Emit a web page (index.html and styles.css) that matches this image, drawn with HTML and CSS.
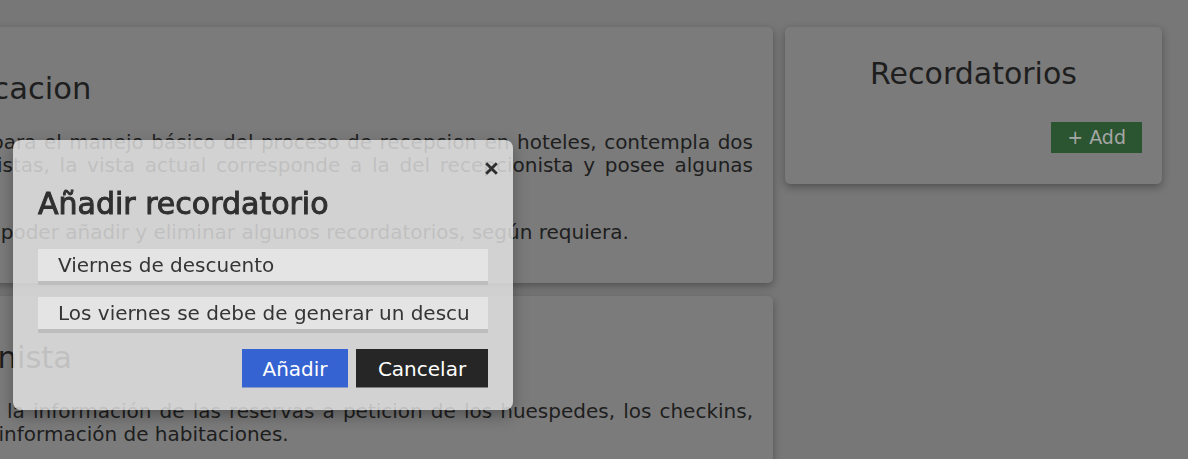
FILE: index.html
```html
<!DOCTYPE html>
<html lang="es">
<head>
<meta charset="utf-8">
<title>Recepción</title>
<link rel="stylesheet" href="styles.css">
</head>
<body>
<div class="layout">
  <main class="col-main">
    <section class="card">
      <h2 class="card-title">Información general acerca de la aplicacion</h2>
      <p class="para">
        <span class="ln jf">Esta aplicación fue desarrollada como una herramienta para el manejo básico del proceso de recepcion en hoteles, contempla dos</span>
        <span class="ln jf">vistas: una para administradores y otra para recepcionistas, la vista actual corresponde a la del recepcionista y posee algunas</span>
        <span class="ln">funcionalidades adicionales.</span>
      </p>
      <p class="para">
        <span class="ln">Adicional a esto, el recepcionista tendrá la posibilidad de poder añadir y eliminar algunos recordatorios, según requiera.</span>
      </p>
    </section>
    <section class="card">
      <h2 class="card-title">Funcionalidades de la vista - recepcionista</h2>
      <p class="para">
        <span class="ln jf">Desde aquí el recepcionista puede gestionar y consultar la información de las reservas a peticion de los huespedes, los checkins,</span>
        <span class="ln">los checkouts, los pagos de cada huesped, y consultar la información de habitaciones.</span>
      </p>
    </section>
  </main>
  <aside class="col-side">
    <section class="card card-side">
      <h2 class="side-title">Recordatorios</h2>
      <div class="side-actions"><button class="btn-add" type="button">+ Add</button></div>
    </section>
  </aside>
</div>

<div class="modal" role="dialog" aria-label="Añadir recordatorio">
  <button class="modal-close" type="button" aria-label="Cerrar">
    <svg width="13" height="13" viewBox="0 0 13 13"><path d="M1.2 1.2L11.8 11.8M11.8 1.2L1.2 11.8" stroke="#2e2e2e" stroke-width="2.8" fill="none"/></svg>
  </button>
  <h3 class="modal-title">Añadir recordatorio</h3>
  <div class="modal-fields">
    <input class="field" type="text" value="Viernes de descuento">
    <input class="field" type="text" value="Los viernes se debe de generar un descuento del 10% en todas las reservas">
  </div>
  <div class="modal-actions">
    <button class="btn btn-primary" type="button">Añadir</button>
    <button class="btn btn-dark" type="button">Cancelar</button>
  </div>
</div>
</body>
</html>
```
FILE: styles.css
```css
html, body {
  margin: 0;
  padding: 0;
  overflow: hidden;
  background: #777777;
  font-family: "DejaVu Sans", sans-serif;
  color: #222;
}

.layout {
  display: flex;
  gap: 12px;
  padding: 27px 26px 0 0;
  margin-left: -597px;
  align-items: flex-start;
}

.col-main {
  width: 1370px;
  flex: none;
  display: flex;
  flex-direction: column;
  gap: 13px;
}

.col-side {
  width: 377px;
  flex: none;
}

.card {
  background: #7b7b7b;
  border-radius: 5px;
  box-shadow: 0 3px 9px rgba(0, 0, 0, 0.33);
  padding: 20px 20px 17px;
}

.card-title {
  margin: 24px 0 24px;
  font-size: 30.6px;
  line-height: 36px;
  font-weight: 400;
  color: #1e1e1e;
  white-space: nowrap;
}

.para {
  margin: 0 0 22.5px;
  font-size: 20px;
  line-height: 22.5px;
  color: #1e1e1e;
}

.ln {
  display: block;
}

.jf {
  text-align: justify;
  text-align-last: justify;
}

.card-side {
  padding: 29px 20px 31px;
}

.side-title {
  margin: 0;
  text-align: center;
  font-size: 30px;
  line-height: 36px;
  font-weight: 400;
  color: #1e1e1e;
}

.side-actions {
  display: flex;
  justify-content: flex-end;
  margin-top: 30px;
}

.btn-add {
  height: 31px;
  padding: 0 16px;
  border: none;
  background: #2b5530;
  color: #a6a6a6;
  font-family: "DejaVu Sans", sans-serif;
  font-size: 19px;
  line-height: 31px;
}

.modal {
  position: fixed;
  left: 13px;
  top: 140px;
  width: 500px;
  box-sizing: border-box;
  padding: 46px 25px 22px;
  border-radius: 8px;
  background: rgba(233, 233, 233, 0.8);
  box-shadow: 0 6px 16px rgba(0, 0, 0, 0.3);
}

.modal-close {
  position: absolute;
  top: 22px;
  right: 15px;
  width: 13px;
  height: 13px;
  padding: 0;
  border: none;
  background: transparent;
  display: flex;
}

.modal-title {
  margin: 0 0 27px;
  font-size: 30px;
  line-height: 36px;
  font-weight: 400;
  color: #303030;
  -webkit-text-stroke: 1px #303030;
  white-space: nowrap;
}

.modal-fields {
  display: flex;
  flex-direction: column;
  gap: 12px;
}

.field {
  display: block;
  width: 100%;
  height: 36px;
  box-sizing: border-box;
  padding: 0 20px;
  border: none;
  border-bottom: 4px solid #bdbdbd;
  border-radius: 0;
  background: #e4e4e4;
  color: #353535;
  font-family: "DejaVu Sans", sans-serif;
  font-size: 20px;
  outline: none;
}

.modal-actions {
  display: flex;
  justify-content: flex-end;
  gap: 8px;
  margin-top: 16px;
}

.btn {
  height: 39px;
  padding: 0;
  border: none;
  border-radius: 0;
  color: #fff;
  font-family: "DejaVu Sans", sans-serif;
  font-size: 20px;
  text-align: center;
  box-shadow: inset 0 -1px 0 rgba(200, 200, 200, 0.55);
}

.btn-primary {
  width: 106px;
  background: #3563d1;
}

.btn-dark {
  width: 132px;
  background: #262626;
}
```
